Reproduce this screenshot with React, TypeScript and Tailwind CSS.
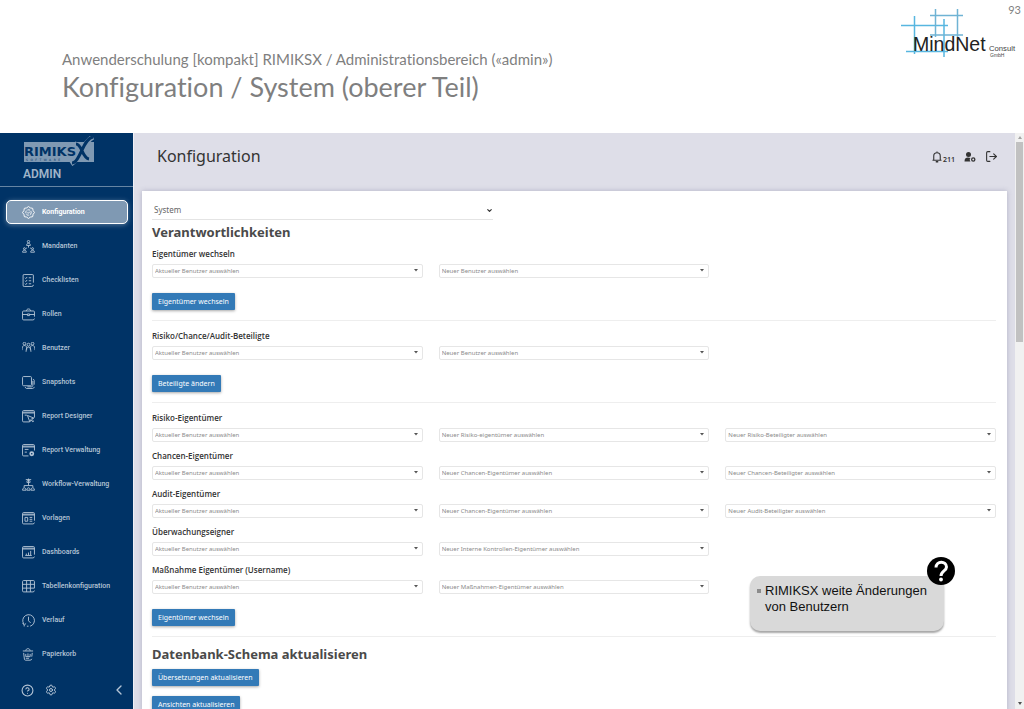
import React from 'react';
import { ChevronDown, ChevronLeft, CircleHelp, LogOut, Settings } from 'lucide-react';

interface NavItem {
  label: string;
  icon: React.ReactNode;
  active?: boolean;
}

interface SelectRow {
  id: string;
  label: string;
  options: string[];
}

const CURRENT_USER = 'Aktueller Benutzer auswählen';
const NEW_USER = 'Neuer Benutzer auswählen';

const navItems: NavItem[] = [
  {
    label: 'Konfiguration',
    active: true,
    icon: (
      <>
        <path d="M12 1l3.500 2.500 4.200.8.800 4.200L23 12l-2.500 3.500-.8 4.200-4.200.8L12 23l-3.500-2.500-4.200-.8-.8-4.200L1 12l2.500-3.500.8-4.200 4.200-.8z" />
        <circle cx="12" cy="12" r="5" strokeDasharray="5 2" />
        <path d="M10 12l1.500 1.500L14.500 10.500" />
      </>
    ),
  },
  {
    label: 'Mandanten',
    icon: (
      <>
        <circle cx="12" cy="3" r="2.200" />
        <path d="M8.500 10c0-5.500 7-5.500 7 0zM12 10v4M9 14.500L7 16M15 14.500l2 1.500" />
        <circle cx="4.500" cy="16" r="1.800" />
        <path d="M1 22.500c0-5 7-5 7 0z" />
        <circle cx="19.500" cy="16" r="1.800" />
        <path d="M16 22.500c0-5 7-5 7 0z" />
      </>
    ),
  },
  {
    label: 'Checklisten',
    icon: (
      <>
        <path d="M21 16V3.500A2 2 0 0 0 19 1H4A2 2 0 0 0 2 3.500v17A2 2 0 0 0 4 23h14a3 3 0 0 0 3-3" />
        <path d="M5.500 7l1.500 1.500L9.500 5.500M5.500 12.500L7 14l2.500-3M5.500 18L7 19.500l2.500-3M12.500 7H17M12.500 12.500H17M12.500 18H17" />
      </>
    ),
  },
  {
    label: 'Rollen',
    icon: (
      <>
        <path d="M23 16V7.500a2 2 0 0 0-2-2H3a2 2 0 0 0-2 2V20a2 2 0 0 0 2 2h17a3 3 0 0 0 3-2.500M8 5.500c0-5 8-5 8 0M1 12h9M14 12h9" />
        <path d="M10 11h4v3h-4z" />
      </>
    ),
  },
  {
    label: 'Benutzer',
    icon: (
      <>
        <circle cx="4.500" cy="3" r="2.500" />
        <circle cx="19.500" cy="3" r="2.500" />
        <circle cx="12" cy="5" r="2.700" />
        <path d="M0 15c0-6 1.500-8.500 4.500-8.500 2 0 3.500 1 4 3v5M24 15c0-6-1.500-8.500-4.500-8.500-2 0-3.500 1-4 3v5M7.500 18c0-11.500 9-11.500 9 0" />
      </>
    ),
  },
  {
    label: 'Snapshots',
    icon: (
      <>
        <rect x="1" y="1" width="16.500" height="17" rx="2" />
        <path d="M20 6c1.500 0 2.500 1 2.500 2v8M6 20.500c0 1 1 2.500 2 2.500h11c2 0 3.500-1 3.500-3M20 9v8c0 2-1 3-3 3h-7" />
      </>
    ),
  },
  {
    label: 'Report Designer',
    icon: (
      <>
        <path d="M23 14V3a2 2 0 0 0-2-2H3a2 2 0 0 0-2 2v17a2 2 0 0 0 2 2h11M1 5.500h22M1 4h22" />
        <path d="M5 9.500h4M10 10l12 5-4.500 1.500 4 4-1.500 1.500-4-4-1.500 4z" />
      </>
    ),
  },
  {
    label: 'Report Verwaltung',
    icon: (
      <>
        <path d="M23 12V3a2 2 0 0 0-2-2H3a2 2 0 0 0-2 2v17a2 2 0 0 0 2 2h9M1 5.500h22M1 4h22M5 10h7M5 15h4" />
        <circle cx="18" cy="18" r="3" strokeWidth="3" />
      </>
    ),
  },
  {
    label: 'Workflow-Verwaltung',
    icon: (
      <>
        <path d="M7 3h10M12 1v13M9 8c0-6 6-6 6 0zM4 17v-3h16v3" />
        <path d="M1 22.500c0-6 6.500-6 6.500 0zM9 22.500c0-6 6-6 6 0zM16.500 22.500c0-6 6.500-6 6.500 0z" />
      </>
    ),
  },
  {
    label: 'Vorlagen',
    icon: (
      <>
        <path d="M23 16V3a2 2 0 0 0-2-2H3a2 2 0 0 0-2 2v17a2 2 0 0 0 2 2h17a3 3 0 0 0 3-2.500M1 5.500h22M1 4h22" />
        <rect x="5.500" y="10" width="5" height="7" />
        <path d="M14 10h5M14 13.500h5M14 17h5" />
      </>
    ),
  },
  {
    label: 'Dashboards',
    icon: (
      <>
        <path d="M23 16V3a2 2 0 0 0-2-2H3a2 2 0 0 0-2 2v17a2 2 0 0 0 2 2h17a3 3 0 0 0 3-2.500M1 5.500h22M1 4h22" />
        <path d="M6 17.500h12M8 17v-3M12 17v-5M16 17V9" />
      </>
    ),
  },
  {
    label: 'Tabellenkonfiguration',
    icon: (
      <path d="M23 15V3a2 2 0 0 0-2-2H3a2 2 0 0 0-2 2v17a2 2 0 0 0 2 2h17a3 3 0 0 0 3-2.500M1 8h22M1 15h22M8.500 1v21M15.500 1v21" />
    ),
  },
  {
    label: 'Verlauf',
    icon: (
      <>
        <path d="M3.500 18.500A10.800 10.800 0 1 1 15 22.500" />
        <path d="M1 16.500l3 4 3.500-3M4 20.500v2.500M12 5v7.500l4 4M9 22.500h3" />
      </>
    ),
  },
  {
    label: 'Papierkorb',
    icon: (
      <>
        <path d="M1.500 5.500h19M7 5c0-5 8-5 8 0M3 9l1.500 12a2 2 0 0 0 2 1.500H15a3 3 0 0 0 3-2.500M19 9l-1 7" />
        <path d="M7 11v5h8v-5M11 10v6M7 19h6" />
      </>
    ),
  },
];

const ownerRows: SelectRow[] = [
  {
    id: 'risiko-eigentuemer',
    label: 'Risiko-Eigentümer',
    options: [CURRENT_USER, 'Neuer Risiko-eigentümer auswählen', 'Neuer Risiko-Beteiligter auswählen'],
  },
  {
    id: 'chancen-eigentuemer',
    label: 'Chancen-Eigentümer',
    options: [CURRENT_USER, 'Neuer Chancen-Eigentümer auswählen', 'Neuer Chancen-Beteiligter auswählen'],
  },
  {
    id: 'audit-eigentuemer',
    label: 'Audit-Eigentümer',
    options: [CURRENT_USER, 'Neuer Chancen-Eigentümer auswählen', 'Neuer Audit-Beteiligter auswählen'],
  },
  {
    id: 'ueberwachungseigner',
    label: 'Überwachungseigner',
    options: [CURRENT_USER, 'Neuer Interne Kontrollen-Eigentümer auswählen'],
  },
  {
    id: 'massnahme-eigentuemer',
    label: 'Maßnahme Eigentümer (Username)',
    options: [CURRENT_USER, 'Neuer Maßnahmen-Eigentümer auswählen'],
  },
];

const MindNetLogo: React.FC = () => (
  <svg viewBox="0 0 116 50" className="h-[50px] w-[116px]" role="img">
    <g stroke="#57b6e0" strokeWidth="1.500" fill="none">
      <path d="M1 16.500h47M6 42.500h42M14.500 7v38M44 10v38" />
      <path d="M30 6.500h33M30 26h33M35.500 0v28M57.500 0v28" stroke="#6fb3d4" />
    </g>
    <text x="13" y="42" fontSize="19.500" fill="#222222" fontFamily="Liberation Sans, sans-serif">MindNet</text>
    <text x="89" y="42" fontSize="7.700" fill="#444444" fontFamily="Liberation Sans, sans-serif">Consult</text>
    <text x="90" y="48" fontSize="5" fill="#444444" fontFamily="Liberation Sans, sans-serif">GmbH</text>
  </svg>
);

const RimiksLogo: React.FC = () => (
  <svg viewBox="0 0 72 30" className="h-[30px] w-[72px]" role="img">
    <rect x="1" y="6" width="70" height="20" fill="#7f99b3" />
    <text x="1" y="20" fontSize="13" fontWeight="700" fill="#003366" fontFamily="DejaVu Sans, sans-serif">RIMIKS</text>
    <text x="3" y="25" fontSize="3" letterSpacing="2.500" fill="#003366" fontFamily="DejaVu Sans, sans-serif">SOFTWARE</text>
    <path d="M70 1C60 6 57 22 48 28M52 8c6 0 6 14 14 15" stroke="#7f99b3" strokeWidth="5" fill="none" />
    <path d="M70 1c-7 1-10 12-14 19-2 4-4 7-7 7M53 8c6 0 6 14 13 15" stroke="#003366" strokeWidth="3" fill="none" />
  </svg>
);

const SelectBox: React.FC<{ id: string; text: string; named?: boolean }> = ({ id, text, named }) => (
  <div className="relative">
    <select
      id={id}
      aria-label={named ? undefined : text}
      className="block h-[14px] w-full appearance-none rounded-[2px] border border-[#e6e6e6] bg-white px-[2px] text-[6px] leading-[12px] text-[#8a8a8a]"
    >
      <option>{text}</option>
    </select>
    <svg viewBox="0 0 4 3" className="pointer-events-none absolute top-[5px] right-[5px] h-[3px] w-[4px]">
      <path d="M0 0h4L2 2.500z" fill="#555555" />
    </svg>
  </div>
);

const SelectRowView: React.FC<{ row: SelectRow }> = ({ row }) => (
  <div>
    <label
      htmlFor={`${row.id}-0`}
      className="mb-[2px] block font-['Open_Sans',sans-serif] text-[8px] leading-4 font-semibold text-[#333333]"
    >
      {row.label}
    </label>
    <div className="grid grid-cols-3 gap-4">
      {row.options.map((text, index) => (
        <SelectBox key={index} id={`${row.id}-${index}`} text={text} named={index === 0} />
      ))}
    </div>
  </div>
);

const ActionButton: React.FC<{ children: React.ReactNode }> = ({ children }) => (
  <button
    type="button"
    className="block h-[17px] rounded-[1px] bg-[#337ab7] px-[6px] text-[7px] leading-[17px] whitespace-nowrap text-white shadow-[0_1px_3px_rgba(0,0,0,0.35)]"
  >
    {children}
  </button>
);

const Sidebar: React.FC = () => (
  <aside className="flex w-[133px] shrink-0 flex-col bg-[#003366] text-[#b5c5d6]">
    <div className="border-b border-[#6685a3] pt-[3px] pb-[4px] pl-[23px]">
      <RimiksLogo />
      <div className="font-['Roboto',sans-serif] text-[12px] leading-4 font-semibold text-[#9fb4c9]">ADMIN</div>
    </div>
    <nav className="mt-[13px] flex flex-col gap-[10px] pr-[5px] pl-[6px] font-['Roboto',sans-serif] text-[7px] font-medium">
      {navItems.map((item) => (
        <a
          key={item.label}
          href="#"
          className={
            item.active
              ? 'flex h-6 items-center gap-[7px] rounded-[5px] border border-white bg-[#7f99b3] pl-[15px] font-bold text-white shadow-[0_1px_5px_rgba(255,255,255,0.35)]'
              : 'flex h-6 items-center gap-[7px] border border-transparent pl-[15px]'
          }
        >
          <svg
            viewBox="0 0 24 24"
            className="h-[13px] w-[13px] shrink-0"
            fill="none"
            stroke="currentColor"
            strokeWidth="1.700"
            strokeLinejoin="round"
          >
            {item.icon}
          </svg>
          {item.label}
        </a>
      ))}
    </nav>
    <div className="mt-4 flex items-center pr-[6px] pl-[21px]">
      <button type="button" aria-label="?">
        <CircleHelp className="h-[13px] w-[13px]" />
      </button>
      <button type="button" aria-label="Konfiguration" className="ml-[11px]">
        <Settings className="h-3 w-3" />
      </button>
      <button type="button" aria-label="<" className="ml-auto">
        <ChevronLeft className="h-4 w-4" />
      </button>
    </div>
  </aside>
);

const ScrollBar: React.FC = () => (
  <div className="flex w-[9px] shrink-0 flex-col items-center justify-between bg-[#f1f1f1]">
    <div className="flex w-full flex-col items-center">
      <svg viewBox="0 0 4 3" className="my-[3px] h-[3px] w-1">
        <path d="M0 3h4L2 0z" fill="#a3a3a3" />
      </svg>
      <div className="h-[200px] w-[7px] bg-[#c1c1c1]" />
    </div>
    <svg viewBox="0 0 4 3" className="my-[4px] h-[3px] w-1">
      <path d="M0 0h4L2 3z" fill="#505050" />
    </svg>
  </div>
);

const HintBox: React.FC = () => (
  <div className="absolute right-[80px] bottom-[78px] min-h-[55px] w-[194px] rounded-[10px] bg-[#d9d9d9] pt-[7px] pr-2 pl-[7px] font-['Liberation_Sans',sans-serif] text-[13px] leading-4 text-[#111111] shadow-[0_2px_2px_rgba(0,0,0,0.35)]">
    <div className="flex gap-1">
      <span className="mt-[6px] h-1 w-1 shrink-0 bg-[#8c8c8c]" />
      <p>
        RIMIKSX weite Änderungen
        <br />
        von Benutzern
      </p>
    </div>
    <svg viewBox="0 0 28 28" className="absolute -top-[19px] -right-[11px] h-7 w-7">
      <circle cx="14" cy="14" r="14" fill="#000000" />
      <path
        d="M9 10.500C9 3.500 19.500 3.500 19.500 10c0 4-5.500 4-5.500 9"
        fill="none"
        stroke="#ffffff"
        strokeWidth="3"
      />
      <circle cx="14" cy="22.500" r="1.900" fill="#ffffff" />
    </svg>
  </div>
);

const App: React.FC = () => {
  return (
    <div className="flex h-screen flex-col overflow-hidden bg-white font-['Noto_Sans',sans-serif]">
      {/* Slide header */}
      <header className="flex h-[133px] shrink-0 justify-between font-['Lato',sans-serif] text-[#7f7f7f] [font-variant-ligatures:none]">
        <div className="pt-[49px] pl-[62px]">
          <p className="text-[15px] leading-5">
            Anwenderschulung [kompakt] RIMIKSX / Administrationsbereich («admin»)
          </p>
          <h1 className="text-[27px] leading-9">Konfiguration / System (oberer Teil)</h1>
        </div>
        <div className="flex items-start pt-[3px] pr-[3px]">
          <div className="-mr-2 pt-[6px]">
            <MindNetLogo />
          </div>
          <span className="text-[11px] leading-[14px]">93</span>
        </div>
      </header>

      {/* Application window */}
      <div className="relative flex min-h-0 flex-1">
        <Sidebar />

        <main className="flex min-w-0 flex-1 flex-col overflow-hidden border-l border-[#f0f0f6] bg-[#dedee8]">
          <div className="flex h-[58px] shrink-0 items-start justify-between pt-[11px] pr-[17px] pl-[23px] text-[#333333]">
            <h2 className="text-[16px] leading-6">Konfiguration</h2>
            <div className="flex items-center gap-[9px] pt-[5px]">
              <button type="button" className="flex items-center">
                <svg viewBox="0 0 24 24" className="h-3 w-3" fill="none" stroke="currentColor" strokeWidth="2.200">
                  <path d="M3 18.500h18M5.500 18V10c0-8.500 13-8.500 13 0v8M12 1v3" />
                  <path d="M9.500 21.500h5" strokeWidth="3" />
                </svg>
                <span className="pt-[6px] text-[7px] leading-[9px] font-semibold">211</span>
              </button>
              <button type="button" aria-label="Benutzer">
                <svg viewBox="0 0 24 24" className="h-3 w-3" fill="currentColor">
                  <circle cx="9" cy="7" r="5" />
                  <path d="M1 21c0-9 7-9 12-7-2 2-2 5 0 7z" />
                  <circle cx="18.500" cy="17" r="3.200" fill="none" stroke="currentColor" strokeWidth="2.600" />
                </svg>
              </button>
              <button type="button" aria-label="Logout">
                <LogOut className="h-[13px] w-[13px]" />
              </button>
            </div>
          </div>

          <div className="mr-2 ml-2 flex-1 bg-white pt-[10px] pr-[11px] pl-[10px] shadow-[0_0_5px_rgba(80,80,120,0.3)]">
            <div className="relative w-[341px] border-b border-[#e4e4e4]">
              <select
                aria-label="System"
                className="block h-[18px] w-full appearance-none bg-transparent px-[2px] text-[8px] leading-[18px] text-[#666666]"
              >
                <option>System</option>
              </select>
              <ChevronDown
                strokeWidth={4}
                className="pointer-events-none absolute top-[6px] right-0 h-[7px] w-[7px] text-[#333333]"
              />
            </div>

            <section>
              <h3 className="mt-[2px] mb-1 text-[13px] leading-5 font-bold text-[#4a4a4a]">Verantwortlichkeiten</h3>
              <div className="mb-[7px] border-b border-[#eeeeee] pb-[10px]">
                <SelectRowView
                  row={{ id: 'eigentuemer', label: 'Eigentümer wechseln', options: [CURRENT_USER, NEW_USER] }}
                />
                <div className="mt-[15px]">
                  <ActionButton>Eigentümer wechseln</ActionButton>
                </div>
              </div>
              <div className="mb-[7px] border-b border-[#eeeeee] pb-[10px]">
                <SelectRowView
                  row={{ id: 'beteiligte', label: 'Risiko/Chance/Audit-Beteiligte', options: [CURRENT_USER, NEW_USER] }}
                />
                <div className="mt-[15px]">
                  <ActionButton>Beteiligte ändern</ActionButton>
                </div>
              </div>
              <div className="mb-[7px] border-b border-[#eeeeee] pb-[10px]">
                <div className="flex flex-col gap-[6px]">
                  {ownerRows.map((row) => (
                    <SelectRowView key={row.id} row={row} />
                  ))}
                </div>
                <div className="mt-[15px]">
                  <ActionButton>Eigentümer wechseln</ActionButton>
                </div>
              </div>
            </section>

            <section className="flex flex-col items-start gap-[10px]">
              <h3 className="-mb-[5px] text-[13px] leading-5 font-bold text-[#4a4a4a]">
                Datenbank-Schema aktualisieren
              </h3>
              <ActionButton>Übersetzungen aktualisieren</ActionButton>
              <ActionButton>Ansichten aktualisieren</ActionButton>
            </section>
          </div>
        </main>

        <ScrollBar />
        <HintBox />
      </div>
    </div>
  );
};

export default App;
